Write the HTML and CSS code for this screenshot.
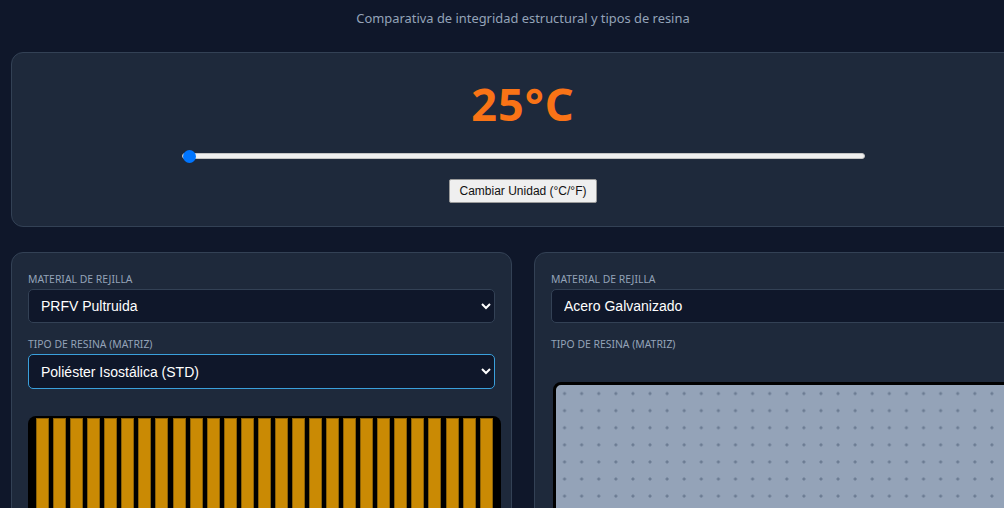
FILE: index.html
```html
<!DOCTYPE html>
<html lang="es">

<head>
    <meta charset="UTF-8">
    <meta name="viewport" content="width=device-width, initial-scale=1.0">
    <title>Comparativa de Rejillas</title>
    <link rel="stylesheet" href="styles.css">
</head>

<body>
    <div class="container">
        <p class="subtitle">Comparativa de integridad estructural y tipos de resina</p>

        <div class="panel-temp">
            <h2 class="temp-value">25°C</h2>
            <input type="range" class="temp-slider" min="25" max="200" value="25">
            <button type="button" class="btn-unit">Cambiar Unidad (°C/°F)</button>
        </div>

        <div class="compare">
            <div class="card">
                <div class="field">
                    <label class="field-label">Material de rejilla</label>
                    <select class="field-select">
                        <option>PRFV Pultruida</option>
                        <option>Acero Galvanizado</option>
                    </select>
                </div>
                <div class="field">
                    <label class="field-label">Tipo de resina (matriz)</label>
                    <select class="field-select focused">
                        <option>Poliéster Isostálica (STD)</option>
                        <option>Viniléster</option>
                        <option>Fenólica</option>
                    </select>
                </div>
                <div class="visual visual-frp">
                    <span></span><span></span><span></span><span></span><span></span><span></span><span></span><span></span><span></span>
                    <span></span><span></span><span></span><span></span><span></span><span></span><span></span><span></span><span></span>
                    <span></span><span></span><span></span><span></span><span></span><span></span><span></span><span></span><span></span>
                </div>
            </div>

            <div class="card">
                <div class="field">
                    <label class="field-label">Material de rejilla</label>
                    <select class="field-select">
                        <option>Acero Galvanizado</option>
                        <option>PRFV Pultruida</option>
                    </select>
                </div>
                <div class="field">
                    <label class="field-label">Tipo de resina (matriz)</label>
                </div>
                <div class="visual visual-steel"></div>
            </div>
        </div>
    </div>
</body>

</html>
```

FILE: styles.css
```css
* {
    box-sizing: border-box;
}

body {
    margin: 0;
    padding: 0 11px;
    background-color: #0f172a;
    font-family: 'Noto Sans', sans-serif;
    color: #e2e8f0;
}

.container {
    width: 1024px;
}

.subtitle {
    margin: 0 0 25px;
    padding-top: 9px;
    text-align: center;
    font-size: 12.9px;
    line-height: 18px;
    color: #94a3b8;
}

.panel-temp {
    background-color: #1e293b;
    border: 1px solid #334155;
    border-radius: 12px;
    padding: 24px 24px 23px;
    text-align: center;
}

.temp-value {
    margin: 0 0 18px;
    font-size: 45px;
    line-height: 53px;
    font-weight: 700;
    letter-spacing: 1px;
    color: #f97316;
}

.temp-slider {
    -webkit-appearance: none;
    appearance: none;
    display: block;
    width: 683px;
    height: 16px;
    margin: 0 auto 14px;
    background: transparent;
}

.temp-slider::-webkit-slider-runnable-track {
    height: 6px;
    background-color: #efefef;
    border: 1px solid #c4c4c4;
    border-radius: 3px;
}

.temp-slider::-webkit-slider-thumb {
    -webkit-appearance: none;
    width: 13px;
    height: 13px;
    margin-top: -4.5px;
    border-radius: 50%;
    background-color: #0075ff;
}

.btn-unit {
    font-family: 'Liberation Sans', Arial, sans-serif;
    font-size: 12px;
    line-height: 14px;
    padding: 4px 10px;
    color: #111;
    background-color: #efefef;
    border: 1px solid #9a9a9a;
    border-radius: 2px;
}

.compare {
    display: grid;
    grid-template-columns: minmax(0, 1fr) minmax(0, 1fr);
    gap: 22px;
    margin-top: 25px;
}

.card {
    background-color: #1e293b;
    border: 1px solid #334155;
    border-radius: 12px;
    padding: 20px 16px 18px;
    height: 300px;
}

.field {
    margin-bottom: 15px;
}

.field-label {
    display: block;
    margin-bottom: 3px;
    font-size: 10.4px;
    line-height: 13px;
    text-transform: uppercase;
    color: #94a3b8;
}

.field-select {
    width: 100%;
    height: 34px;
    padding: 0 8px 0 8px;
    font-family: 'Liberation Sans', Arial, sans-serif;
    font-size: 14px;
    color: #ffffff;
    background-color: #0f172a;
    border: 1px solid #334155;
    border-radius: 5px;
}

.field-select.focused {
    height: 35px;
    border-color: #3aa0dc;
}

.visual {
    margin-top: 27px;
    height: 220px;
    border-radius: 8px;
}

.visual-frp {
    width: 473px;
    background-color: #000000;
    display: flex;
    justify-content: space-between;
    padding: 2px 8px 0;
}

.visual-frp span {
    width: 13px;
    background-color: #ca8a04;
    box-shadow: inset 0 0 0 1px #8a6108;
}

.visual-steel {
    margin-top: 31px;
    margin-left: 2px;
    width: 473px;
    border: 3px solid #000000;
    background-color: #94a3b8;
    background-image: radial-gradient(circle, #6b7b92 1.3px, transparent 1.7px);
    background-size: 17.1px 17.1px;
    background-position: 0 0;
}
```
